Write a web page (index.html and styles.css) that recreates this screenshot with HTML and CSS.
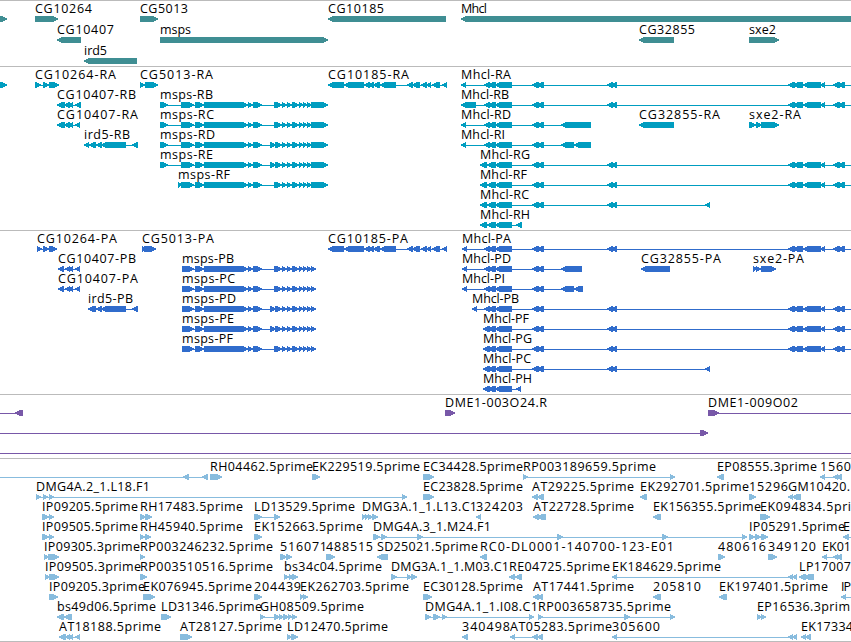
FILE: index.html
```html
<!DOCTYPE html>
<html lang="en">
<head>
    <meta charset="UTF-8">
    <title>Genome browser</title>
    <link rel="stylesheet" href="styles.css">
</head>
<body>
    <div class="browser">
        <section class="track gene" id="gene"></section>
        <section class="track transcript" id="transcript"></section>
        <section class="track protein" id="protein"></section>
        <section class="track bac" id="bac"></section>
        <section class="track est" id="est"></section>
    </div>
    <script src="tracks.js"></script>
</body>
</html>
```
FILE: styles.css
```css
body {
    margin: 0;
    background: #fff;
    font-family: "Open Sans", "DejaVu Sans", sans-serif;
    font-size: 12.5px;
    overflow: hidden;
}
.browser {
    width: 851px;
    height: 642px;
    display: flex;
    flex-direction: column;
    overflow: hidden;
}
.track {
    border-top: 1px solid #bbb;
    padding-bottom: 3px;
}
.row {
    display: block;
    width: 851px;
    height: 20px;
    overflow: visible;
}
.row text {
    fill: #000;
}
.row polygon,
.row rect {
    fill: currentColor;
    shape-rendering: crispEdges;
}
.gene {
    color: #3f8e93;
    padding-bottom: 2px;
}
.gene .row {
    height: 21px;
}
.transcript {
    color: #009dc0;
}
.protein {
    color: #306ccc;
}
.bac {
    color: #7858a8;
}
.est {
    color: #88bcde;
    padding-bottom: 2px;
    border-bottom: 1px solid #bbb;
}
```
FILE: tracks.js
```js
const NS = 'http://www.w3.org/2000/svg';

// exons shared by several splice forms
const MSPS_A = '181-194 195-204 204-248 248-253 253-262';
const MSPS_B = '282-287 287-292 292-299 299-303 303-307 307-312';
const MID = '532-539 537-544';
const BODY = '484-490 488-496 495-512 ' + MID;
const BODY_R = '480-487 487-496 495-512';
const BODY_P = '483-490 488-496 495-512';
const FAR = '607-613 611-617';
const TAIL = FAR + ' 788-795 793-803 803-821 820-825 833-840 838-845 870-880';
const CG10185 = '328-344 344-364 364-370 368-374 373-380 380-396 407-413 412-420 421-427 426-431 432-440 442-447';

// feature: [start, end of label, label, direction, exons]
const tracks = {
    gene: [
        [
            [0, 0, '', '>', '-20-7'],
            [35, 92, 'CG10264', '>', '35-58'],
            [140, 188, 'CG5013', '>', '140-158'],
            [328, 384, 'CG10185', '<', '328-446'],
            [461, 487, 'Mhcl', '<', '461-900']
        ],
        [
            [57, 114, 'CG10407', '<', '57-81'],
            [160, 191, 'msps', '>', '160-328'],
            [639, 695, 'CG32855', '<', '639-674'],
            [749, 776, 'sxe2', '>', '749-779']
        ],
        [
            [84, 107, 'ird5', '<', '84-137']
        ]
    ],
    transcript: [
        [
            [0, 0, '', '>', '-20-7'],
            [35, 116, 'CG10264-RA', '>', '35-41 43-49 49-59'],
            [140, 213, 'CG5013-RA', '>', '140-145 145-158'],
            [328, 409, 'CG10185-RA', '<', CG10185],
            [461, 511, 'Mhcl-RA', '<', '461-466 ' + BODY + ' ' + TAIL]
        ],
        [
            [57, 136, 'CG10407-RB', '<', '57-65 64-70 68-73 75-81'],
            [160, 213, 'msps-RB', '>', '160-168 ' + MSPS_A + ' 274-282 ' + MSPS_B + ' 311-328'],
            [461, 509, 'Mhcl-RB', '<', '461-476 ' + BODY + ' ' + TAIL]
        ],
        [
            [57, 138, 'CG10407-RA', '<', '57-65 64-70 68-73 75-80'],
            [160, 214, 'msps-RC', '>', '160-168 ' + MSPS_A + ' 274-282 ' + MSPS_B + ' 311-328'],
            [461, 511, 'Mhcl-RD', '<', '461-466 ' + BODY + ' 561-591'],
            [639, 720, 'CG32855-RA', '<', '639-674'],
            [749, 801, 'sxe2-RA', '>', '749-756 756-762 761-779']
        ],
        [
            [84, 130, 'ird5-RB', '<', '84-89 89-96 96-102 101-126 132-138'],
            [160, 215, 'msps-RD', '>', '160-168 ' + MSPS_A + ' 270-276 275-282 ' + MSPS_B + ' 311-328'],
            [461, 505, 'Mhcl-RI', '<', '461-466 ' + BODY + ' 561-574 574-591']
        ],
        [
            [160, 213, 'msps-RE', '>', '160-168 ' + MSPS_A + ' 270-276 275-282 ' + MSPS_B + ' 311-328'],
            [480, 530, 'Mhcl-RG', '<', BODY_R + ' ' + MID + ' ' + TAIL]
        ],
        [
            [178, 230, 'msps-RF', '>', '178-182 ' + MSPS_A + ' 274-282 ' + MSPS_B + ' 311-328'],
            [480, 527, 'Mhcl-RF', '<', BODY_R + ' ' + MID + ' ' + TAIL]
        ],
        [
            [480, 529, 'Mhcl-RC', '<', BODY_R + ' ' + MID + ' ' + FAR + ' 705-710']
        ],
        [
            [480, 530, 'Mhcl-RH', '<', BODY_R + ' 516-522']
        ]
    ],
    protein: [
        [
            [37, 117, 'CG10264-PA', '>', '37-42 43-49 49-57'],
            [142, 214, 'CG5013-PA', '>', '142-146 144-156'],
            [328, 408, 'CG10185-PA', '<', CG10185],
            [462, 511, 'Mhcl-PA', '<', '462-467 ' + BODY + ' ' + TAIL]
        ],
        [
            [58, 136, 'CG10407-PB', '<', '58-64 65-70 68-73 75-80'],
            [182, 234, 'msps-PB', '>', '182-194 ' + MSPS_A.slice(8) + ' 274-282 ' + MSPS_B + ' 311-316'],
            [462, 511, 'Mhcl-PD', '<', '462-467 ' + BODY + ' 561-582'],
            [641, 721, 'CG32855-PA', '<', '641-670'],
            [753, 804, 'sxe2-PA', '>', '753-757 756-761 761-776']
        ],
        [
            [58, 138, 'CG10407-PA', '<', '58-64 65-70 68-73 75-80'],
            [182, 235, 'msps-PC', '>', '182-194 ' + MSPS_A.slice(8) + ' 274-282 ' + MSPS_B + ' 311-316'],
            [462, 505, 'Mhcl-PI', '<', '462-467 ' + BODY + ' 561-574 574-583']
        ],
        [
            [88, 133, 'ird5-PB', '<', '88-96 96-102 101-126 132-138'],
            [182, 236, 'msps-PD', '>', '182-194 ' + MSPS_A.slice(8) + ' 270-276 275-282 ' + MSPS_B + ' 311-316'],
            [472, 519, 'Mhcl-PB', '<', '472-477 ' + BODY + ' ' + TAIL]
        ],
        [
            [182, 234, 'msps-PE', '>', '182-194 ' + MSPS_A.slice(8) + ' 270-276 275-282 ' + MSPS_B + ' 311-316'],
            [483, 529, 'Mhcl-PF', '<', BODY_P + ' ' + MID + ' ' + TAIL]
        ],
        [
            [182, 233, 'msps-PF', '>', '182-194 ' + MSPS_A.slice(8) + ' 274-282 ' + MSPS_B + ' 311-316'],
            [483, 532, 'Mhcl-PG', '<', BODY_P + ' ' + MID + ' ' + TAIL]
        ],
        [
            [483, 531, 'Mhcl-PC', '<', BODY_P + ' ' + MID + ' ' + FAR + ' 705-710']
        ],
        [
            [483, 532, 'Mhcl-PH', '<', BODY_P + ' 516-521']
        ]
    ],
    bac: [
        [
            [0, 0, '', '<', '-20--10 15-23'],
            [445, 547, 'DME1-003O24.R', '>', '445-455'],
            [708, 798, 'DME1-009O02', '>', '708-719 870-880']
        ],
        [
            [0, 0, '', '>', '-20--10 700-708']
        ],
        [
            [0, 0, '', '>', '-20--10 870-880']
        ]
    ],
    est: [
        [
            [0, 0, '', '<', '-20--10 183-189 202-208'],
            [210, 313, 'RH04462.5prime', '>', '210-222'],
            [312, 420, 'EK229519.5prime', '>', '312-320'],
            [423, 523, 'EC34428.5prime', '>', '423-434'],
            [523, 656, 'RP003189659.5prime', '>', '523-528 670-675'],
            [717, 817, 'EP08555.3prime', '<', '717-724'],
            [820, 851, '1560', '<', '820-825 833-838 836-842']
        ],
        [
            [36, 150, 'DMG4A.2_1.L18.F1', '>', '36-41 43-48 49-54 402-407'],
            [423, 523, 'EC23828.5prime', '>', '423-434'],
            [532, 634, 'AT29225.5prime', '<', '532-538 537-544'],
            [640, 749, 'EK292701.5prime', '<', '640-647'],
            [749, 788, '15296', '>', '749-756'],
            [788, 850, 'GM10420.', '<', '788-793 792-801']
        ],
        [
            [42, 138, 'IP09205.5prime', '>', '42-49 49-54'],
            [140, 243, 'RH17483.5prime', '>', '140-146 145-152'],
            [254, 355, 'LD13529.5prime', '>', '254-262 274-280'],
            [362, 477, 'DMG3A.1_1.L13.C1', '>', '362-366 365-369 368-373 372-378'],
            [476, 523, '324203', '<', '476-481'],
            [533, 634, 'AT22728.5prime', '<', '533-539 537-546'],
            [653, 761, 'EK156355.5prime', '<', '653-661'],
            [760, 851, 'EK094834.5pri', '>', '760-770']
        ],
        [
            [42, 138, 'IP09505.5prime', '>', '42-49 49-54'],
            [140, 243, 'RH45940.5prime', '>', '140-145 145-151'],
            [254, 363, 'EK152663.5prime', '>', '254-262'],
            [373, 491, 'DMG4A.3_1.M24.F1', '>', '373-380 381-387 417-423 557-563 662-668 742-747'],
            [749, 845, 'IP05291.5prime', '>', '749-755 755-761 761-768'],
            [843, 850, 'E', '<', '843-849 870-880']
        ],
        [
            [44, 140, 'IP09305.3prime', '>', '44-49 48-59'],
            [140, 273, 'RP003246232.5prime', '>', '140-145'],
            [280, 327, '516071', '>', '280-287 286-292'],
            [326, 373, '488515', '>', '326-335'],
            [377, 478, 'SD25021.5prime', '<', '377-388'],
            [480, 674, 'RC0-DL0001-140700-123-E01', '<', '480-487'],
            [718, 766, '480616', '>', '718-725'],
            [768, 816, '349120', '>', '768-777'],
            [822, 851, 'EK01', '<', '822-827 833-838 836-842']
        ],
        [
            [45, 141, 'IP09505.3prime', '>', '45-50 49-59'],
            [140, 273, 'RP003510516.5prime', '>', '140-147'],
            [284, 382, 'bs34c04.5prime', '>', '284-289 289-294 292-298'],
            [391, 509, 'DMG3A.1_1.M03.C1', '>', '391-397 407-412 411-417'],
            [509, 610, 'RE04725.5prime', '<', '509-515 515-522'],
            [612, 721, 'EK184629.5prime', '<', '612-617 788-793 792-797'],
            [799, 851, 'LP17007', '<', '799-806 804-814']
        ],
        [
            [49, 145, 'IP09205.3prime', '>', '49-58'],
            [143, 252, 'EK076945.5prime', '>', '143-155'],
            [254, 301, '204439', '>', '254-262'],
            [300, 409, 'EK262703.5prime', '>', '300-304 303-308'],
            [423, 523, 'EC30128.5prime', '>', '423-432'],
            [533, 634, 'AT17441.5prime', '<', '533-539 537-543'],
            [653, 701, '205810', '<', '653-661'],
            [719, 828, 'EK197401.5prime', '<', '719-727'],
            [841, 851, 'IP', '<', '841-846 870-880']
        ],
        [
            [57, 156, 'bs49d06.5prime', '<', '57-64 64-72'],
            [161, 262, 'LD31346.5prime', '>', '161-171'],
            [260, 364, 'GH08509.5prime', '>', '260-265 274-280 279-284 283-289 288-292 292-297'],
            [425, 538, 'DMG4A.1_1.I08.C1', '>', '425-431 433-440 442-447 529-534'],
            [538, 671, 'RP003658735.5prime', '>', '538-543 624-630 670-675'],
            [757, 850, 'EP16536.3prim', '>', '757-762 761-766']
        ],
        [
            [59, 161, 'AT18188.5prime', '<', '59-66 65-70 68-73 75-80'],
            [180, 282, 'AT28127.5prime', '>', '180-192'],
            [287, 388, 'LD12470.5prime', '>', '287-292 291-298'],
            [462, 510, '340498', '<', '462-468'],
            [510, 612, 'AT05283.5prime', '<', '510-515 532-538 537-543'],
            [612, 660, '305600', '<', '612-617 788-793 792-797'],
            [801, 853, 'EK17334', '<', '801-806 805-811']
        ]
    ]
};

function add(parent, name, attrs) {
    const el = document.createElementNS(NS, name);
    for (const key in attrs) {
        el.setAttribute(key, attrs[key]);
    }
    parent.appendChild(el);
    return el;
}

function drawExon(svg, a, b, dir) {
    const tip = Math.min(5, b - a);
    let points;
    if (dir === '>') {
        points = `${a},15 ${b - tip},15 ${b},17.4 ${b},18.6 ${b - tip},21 ${a},21`;
    } else {
        points = `${b},15 ${a + tip},15 ${a},17.4 ${a},18.6 ${a + tip},21 ${b},21`;
    }
    add(svg, 'polygon', { points });
}

function drawFeature(svg, [start, end, label, dir, exons]) {
    const list = exons.split(' ').map(e => e.match(/^(-?\d+)-(-?\d+)$/).slice(1).map(Number));
    const from = list[0][0];
    const to = list[list.length - 1][1];
    if (list.length > 1) {
        add(svg, 'rect', { x: from + 1, y: 18, width: to - from - 2, height: 1 });
    }
    for (const [a, b] of list) {
        drawExon(svg, a, b, dir);
    }
    if (label) {
        const text = add(svg, 'text', { x: start, y: 12, textLength: end - start });
        text.textContent = label;
    }
}

for (const id in tracks) {
    for (const row of tracks[id]) {
        const svg = add(document.getElementById(id), 'svg', { class: 'row' });
        row.forEach(feature => drawFeature(svg, feature));
    }
}
```
